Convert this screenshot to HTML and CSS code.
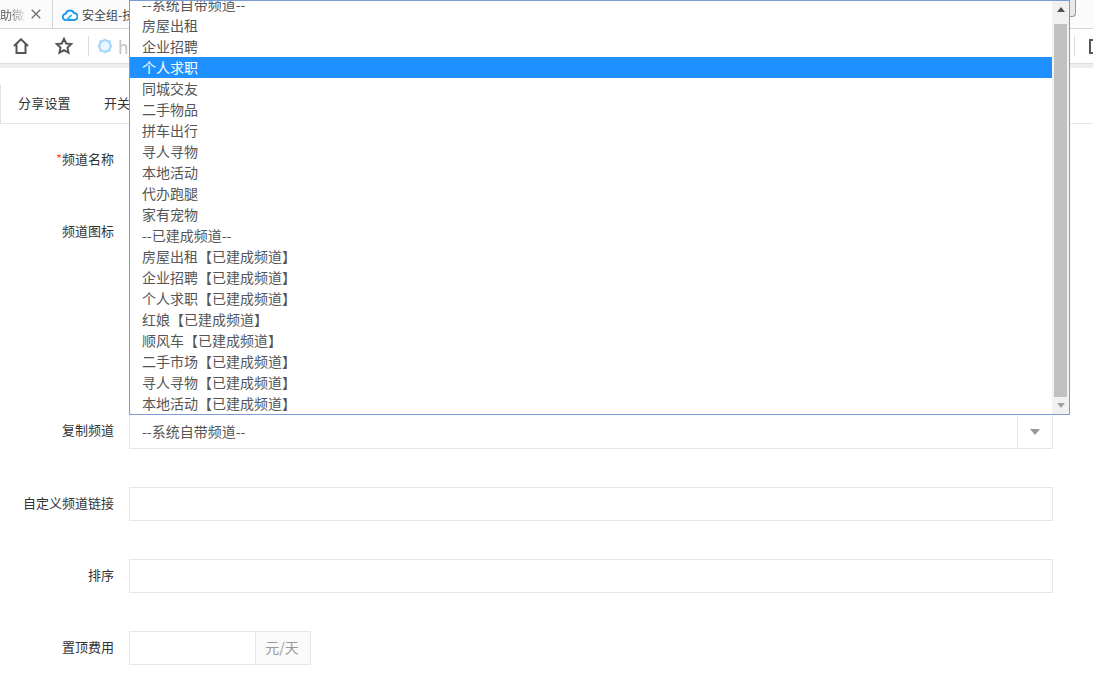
FILE: index.html
```html
<!DOCTYPE html>
<html lang="zh-CN">
<head>
<meta charset="utf-8">
<title>频道设置</title>
<link rel="stylesheet" href="styles.css">
</head>
<body>
<div class="browser">
  <div class="tabstrip">
    <div class="tab tab-first"><span class="tab-title tab-fade">助微</span>
      <svg class="tab-close" width="10" height="10" viewBox="0 0 10 10"><path d="M.7.7l8.600 8.600M9.300.7L.7 9.300" stroke="#6e6e6e" stroke-width="1.300" fill="none"/></svg>
    </div>
    <div class="tab">
      <svg class="tab-icon" width="16" height="13" viewBox="0 0 16 13"><path d="M4 12a3.100 3.100 0 0 1-.3-6.200 4.400 4.400 0 0 1 8.300-.8 3.500 3.500 0 0 1 .2 7z" fill="#fff" stroke="#1e9be8" stroke-width="2"/><path d="M4 12c2.500-.3 3.500-3.600 5.800-5" fill="none" stroke="#35b4ee" stroke-width="2"/></svg>
      <span class="tab-title">安全组-技</span>
    </div>
    <div class="window-btn"></div>
  </div>
  <div class="toolbar">
    <svg class="tool-icon" width="16" height="16" viewBox="0 0 16 16"><path d="M1 8l7-6.700L15 8M3.500 6.500V15h9V6.500" fill="none" stroke="#555" stroke-width="2"/></svg>
    <svg class="tool-icon tool-star" width="18" height="18" viewBox="0 0 18 18"><path d="M9 1.800l2.200 4.700 5 .6-3.700 3.500 1 5.100L9 13.200l-4.500 2.500 1-5.100L1.800 7.100l5-.6z" fill="none" stroke="#555" stroke-width="2"/></svg>
    <div class="tool-divider"></div>
    <svg class="site-icon" width="16" height="16" viewBox="0 0 16 16"><path d="M8 .5l2.600 1.600 3 .3.300 3L15.500 8l-1.600 2.600-.3 3-3 .3L8 15.500l-2.600-1.600-3-.3-.3-3L.5 8l1.600-2.600.3-3 3-.3z" fill="#a5d8fa"/><circle cx="8" cy="8" r="4.500" fill="#eaf7ff"/></svg>
    <span class="url">ht</span>
    <div class="tool-right"><div class="tool-divider"></div><div class="reader-icon"></div></div>
  </div>
  <div class="toolbar-edge"></div>
</div>

<main class="page">
  <nav class="tabs">
    <a class="page-tab page-tab-active">分享设置</a>
    <a class="page-tab">开关</a>
  </nav>
  <form class="form">
    <div class="row">
      <label class="label"><span class="req">*</span>频道名称</label>
      <div class="control"><div class="input"></div></div>
    </div>
    <div class="row row-icon">
      <label class="label">频道图标</label>
      <div class="control"></div>
    </div>
    <div class="row">
      <label class="label">复制频道</label>
      <div class="control"><div class="input select"><span class="select-value">--系统自带频道--</span><span class="select-arrow"><i class="arrow-down"></i></span></div></div>
    </div>
    <div class="row">
      <label class="label">自定义频道链接</label>
      <div class="control"><div class="input"></div></div>
    </div>
    <div class="row">
      <label class="label">排序</label>
      <div class="control"><div class="input"></div></div>
    </div>
    <div class="row">
      <label class="label">置顶费用</label>
      <div class="control control-addon"><div class="input addon-input"></div><div class="addon">元/天</div></div>
    </div>
  </form>
</main>

<div class="dropdown">
  <ul class="options">
    <li class="option">--系统自带频道--</li>
    <li class="option">房屋出租</li>
    <li class="option">企业招聘</li>
    <li class="option option-active">个人求职</li>
    <li class="option">同城交友</li>
    <li class="option">二手物品</li>
    <li class="option">拼车出行</li>
    <li class="option">寻人寻物</li>
    <li class="option">本地活动</li>
    <li class="option">代办跑腿</li>
    <li class="option">家有宠物</li>
    <li class="option">--已建成频道--</li>
    <li class="option">房屋出租【已建成频道】</li>
    <li class="option">企业招聘【已建成频道】</li>
    <li class="option">个人求职【已建成频道】</li>
    <li class="option">红娘【已建成频道】</li>
    <li class="option">顺风车【已建成频道】</li>
    <li class="option">二手市场【已建成频道】</li>
    <li class="option">寻人寻物【已建成频道】</li>
    <li class="option">本地活动【已建成频道】</li>
  </ul>
  <div class="scrollbar">
    <i class="sb-up"></i>
    <div class="sb-thumb"></div>
    <i class="sb-down"></i>
  </div>
</div>
</body>
</html>
```
FILE: styles.css
```css
* { box-sizing: border-box; }
html, body { margin: 0; padding: 0; height: 675px; overflow: hidden; background: #fff; }
body { font-family: "Noto Sans CJK SC", "Liberation Sans", sans-serif; font-size: 13px; color: #333; position: relative; }

.browser { height: 68px; display: flex; flex-direction: column; background: #fff; }
.tabstrip { height: 29px; flex: none; display: flex; align-items: center; background: #fbfbfb; border-bottom: 1px solid #d6d6d6; font-size: 12px; color: #444; }
.tab { height: 28px; display: flex; align-items: center; padding-left: 9px; }
.tab-first { width: 53px; padding-left: 0; border-right: 1px solid #d4d4d4; justify-content: space-between; padding-right: 11px; }
.tab-fade { background: linear-gradient(90deg, #555 40%, #ccc 90%); -webkit-background-clip: text; background-clip: text; color: transparent; }
.tab-icon { margin-right: 4px; }
.window-btn { margin-left: auto; margin-right: 17px; width: 26px; height: 17px; align-self: flex-start; border: 1px solid #999; border-top: 0; border-left: 0; border-radius: 0 0 4px 0; background: #e9e9e9; }
.toolbar { height: 34px; flex: none; display: flex; align-items: center; padding-left: 13px; background: #fff; }
.tool-star { margin-left: 26px; }
.tool-icon { flex: none; }
.tool-divider { width: 1px; height: 20px; background: #dcdcdc; margin-left: 15px; }
.site-icon { margin-left: 8px; flex: none; }
.url { margin-left: 5px; color: #c9c3bd; font-size: 17px; }
.tool-right { margin-left: auto; display: flex; align-items: center; gap: 14px; }
.tool-right .tool-divider { margin-left: 0; }
.reader-icon { width: 4px; height: 15px; border: 2px solid #555; border-right: 0; border-radius: 1px 0 0 1px; }
.toolbar-edge { height: 5px; flex: none; background: #ededed; border-top: 1px solid #dcdcdc; }

.tabs { height: 56px; padding-top: 17px; display: flex; border-bottom: 1px solid #e6e6e6; }
.page-tab { height: 38px; line-height: 35px; padding: 0 18px; color: #333; font-size: 13px; white-space: nowrap; }
.page-tab-active { width: 86px; padding: 0 0 0 17px; background: #fff; border-left: 1px solid #e2e2e2; letter-spacing: .2px; }

.form { padding-top: 19px; }
.row { display: flex; margin-bottom: 38px; }
.row-icon { height: 161px; }
.label { width: 114px; flex: none; text-align: right; font-size: 13px; line-height: 31px; color: #333; }
.req { color: #ff5722; }
.control { width: 924px; margin-left: 15px; flex: none; }
.control-addon { display: flex; width: 182px; }
.input { height: 34px; border: 1px solid #e6e6e6; background: #fff; }
.select { height: 35px; display: flex; justify-content: space-between; align-items: center; padding-left: 12px; font-size: 14px; color: #555; }
.select-value { margin-top: -2px; }
.select-arrow { width: 35px; height: 33px; border-left: 1px solid #e6e6e6; display: flex; align-items: center; justify-content: center; }
.arrow-down { width: 0; height: 0; border: 5px solid transparent; border-top: 6px solid #999; border-bottom: 0; display: block; }
.addon-input { width: 126px; border-right: 0; }
.addon { width: 56px; height: 34px; padding-right: 2px; background: #fafafa; border: 1px solid #e6e6e6; color: #999; font-size: 14px; line-height: 31px; text-align: center; }

.dropdown { position: absolute; left: 129px; top: 0; width: 941px; height: 415px; background: #fff; border: 1px solid #7a9cd3; overflow: hidden; display: flex; }
.options { list-style: none; margin: -7px 0 0; padding: 0; width: 922px; flex: none; }
.option { height: 21px; line-height: 20px; padding-left: 12px; font-size: 14px; color: #555; white-space: nowrap; }
.option-active { background: #1e90ff; color: #fff; }
.scrollbar { width: 17px; flex: none; background: #f1f1f1; display: flex; flex-direction: column; align-items: center; position: relative; }
.sb-up, .sb-down { position: absolute; left: 5px; width: 0; height: 0; border: 4px solid transparent; }
.sb-up { top: 6px; border-top: 0; border-bottom: 5px solid #505050; }
.sb-down { bottom: 6px; border-bottom: 0; border-top: 5px solid #a3a3a3; }
.sb-thumb { margin-top: 23px; width: 13px; height: 373px; background: #c1c1c1; }
```
